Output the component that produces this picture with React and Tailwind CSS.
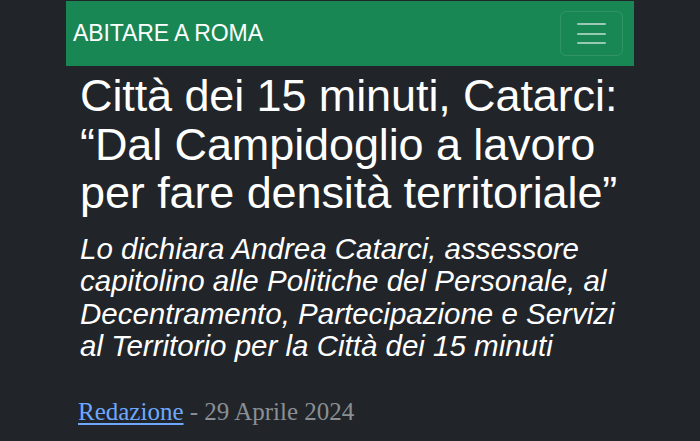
import React from "react";

const App = () => {
  return (
    <div className="min-h-[441px] w-[700px] bg-[#212529] overflow-hidden">
      <div className="mx-auto w-[568px] pt-[1px]">
        {/* Navbar */}
        <nav className="flex items-center justify-between bg-[#198754] h-[65px] pl-[7px] pr-[11px]">
          <span
            className="text-white text-[23px] tracking-[-0.1px]"
            style={{ fontFamily: "'Liberation Sans', Arial, sans-serif" }}
          >
            ABITARE A ROMA
          </span>
          <button className="flex flex-col items-center justify-center gap-[7.5px] w-[63px] h-[45px] rounded-md border border-white/10">
            <span className="block w-[29px] h-[2px] bg-white/55 rounded" />
            <span className="block w-[29px] h-[2px] bg-white/55 rounded" />
            <span className="block w-[29px] h-[2px] bg-white/55 rounded" />
          </button>
        </nav>

        {/* Article header */}
        <div
          className="px-[14px]"
          style={{ fontFamily: "'Liberation Sans', Arial, sans-serif" }}
        >
          <h1 className="mt-[6px] text-white text-[45px] leading-[48.5px] tracking-[-0.1px]">
            Città dei 15 minuti, Catarci: “Dal Campidoglio a lavoro per fare
            densità territoriale”
          </h1>
          <p className="mt-[15px] text-white italic text-[29.5px] leading-[32.5px]">
            Lo dichiara Andrea Catarci, assessore capitolino alle Politiche del
            Personale, al Decentramento, Partecipazione e Servizi al Territorio
            per la Città dei 15 minuti
          </p>
          <div
            className="mt-[30px] text-[25px] text-[#8a8f94] -ml-[2px]"
            style={{ fontFamily: "'Liberation Serif', Georgia, serif" }}
          >
            <a href="#" className="text-[#6ea8fe] underline underline-offset-[3px]">
              Redazione
            </a>{" "}
            - 29 Aprile 2024
          </div>
        </div>
      </div>
    </div>
  );
};

export default App;
